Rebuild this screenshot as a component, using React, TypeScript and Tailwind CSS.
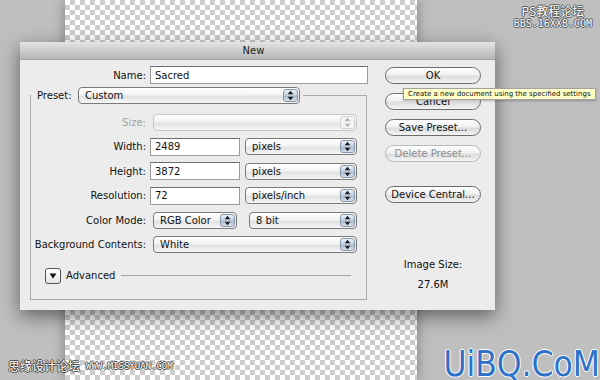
import React from "react";

function Arrows({ disabled }: { disabled?: boolean }) {
  const c = disabled ? "#b4b4b4" : "#1a1a1a";
  return (
    <svg width="7" height="11" viewBox="0 0 7 11">
      <path d="M3.5 0.8 L6.3 4.2 L0.7 4.2 Z" fill={c} />
      <path d="M0.7 6.8 L6.3 6.8 L3.5 10.2 Z" fill={c} />
    </svg>
  );
}

function Select({
  className,
  text,
  disabled,
}: {
  className: string;
  text: string;
  disabled?: boolean;
}) {
  return (
    <div
      className={`flex h-[17px] items-stretch overflow-hidden rounded-[4px] border bg-[linear-gradient(#ffffff,#f4f4f4_45%,#e2e2e2_55%,#f6f6f6)] ${
        disabled ? "border-[#c6c6c6]" : "border-[#7a7a7a]"
      } ${className}`}
    >
      <div className="flex flex-1 items-center pl-[6px] text-[10px] text-[#111]">{text}</div>
      <div
        className={`my-[1px] mr-[1px] flex w-[15px] items-center justify-center rounded-[3px] border ${
          disabled
            ? "border-[#d2d2d2] bg-[#f4f4f4]"
            : "border-[#8696aa] bg-[linear-gradient(#eaf0f6,#c4d0de_48%,#a8b9cd_55%,#d6e0eb)]"
        }`}
      >
        <Arrows disabled={disabled} />
      </div>
    </div>
  );
}

function Input({ className, value }: { className: string; value: string }) {
  return (
    <div
      className={`flex h-[18px] items-center border border-[#9a9a9a] border-t-[#6e6e6e] bg-white pl-[4px] text-[10px] text-[#111] ${className}`}
    >
      {value}
    </div>
  );
}

function Btn({ children, disabled }: { children: React.ReactNode; disabled?: boolean }) {
  return (
    <div
      className={`flex h-[17px] w-[96px] items-center justify-center rounded-full border bg-[linear-gradient(#fefefe,#f1f1f1_45%,#dcdcdc_55%,#f4f4f4)] text-[10px] ${
        disabled ? "border-[#b9b9b9] text-[#8e8e8e]" : "border-[#6c6c6c] text-[#111]"
      }`}
    >
      {children}
    </div>
  );
}

function Label({ children, disabled }: { children: React.ReactNode; disabled?: boolean }) {
  return (
    <div
      className={`w-[115px] shrink-0 text-right text-[10px] ${disabled ? "text-[#a3a3a3]" : "text-[#111]"}`}
    >
      {children}
    </div>
  );
}

export default function App() {
  return (
    <div className="relative h-[380px] w-[600px] overflow-hidden bg-[#bfbfbf] font-['DejaVu_Sans',sans-serif]">
      {/* canvas */}
      <div className="flex h-full pl-[65px]">
        <div className="h-full w-[352px] bg-[image:repeating-conic-gradient(#cdcdcd_0_25%,#ffffff_0_50%)] bg-[length:10px_10px] shadow-[0_0_12px_rgba(0,0,0,0.35)]" />
      </div>

      {/* dialog */}
      <div className="absolute left-[20px] top-[42px] flex h-[268px] w-[475px] flex-col bg-[#ececec] shadow-[0_6px_18px_rgba(0,0,0,0.5)]">
        <div className="flex h-[18px] items-center justify-center border-b border-[#a4a4a4] bg-[linear-gradient(#e4e4e4,#b6b6b6)] pr-[8px] text-[10px] text-[#1a1a1a]">
          New
        </div>
        <div className="flex flex-1">
          {/* left column */}
          <div className="flex w-[350px] flex-col pt-[6px]">
            <div className="flex h-[18px] items-center">
              <div className="w-[126px] text-right text-[10px] text-[#111]">Name:</div>
              <Input className="ml-[4px] w-[218px]" value="Sacred" />
            </div>
            <fieldset className="ml-[10px] mt-[3px] w-[337px] border border-[#ababab] pb-[15px]">
              <legend className="flex items-center pl-[6px] pr-[3px]">
                <span className="w-[38px] text-[10px] text-[#111]">Preset:</span>
                <Select className="ml-[3px] w-[222px]" text="Custom" />
              </legend>
              <div className="flex flex-col gap-[6.6px] pt-[9px]">
                <div className="flex h-[18px] items-center">
                  <Label disabled>Size:</Label>
                  <Select className="ml-[7px] w-[204px]" text="" disabled />
                </div>
                <div className="flex h-[18px] items-center">
                  <Label>Width:</Label>
                  <Input className="ml-[4px] w-[90px]" value="2489" />
                  <Select className="ml-[5px] w-[112px]" text="pixels" />
                </div>
                <div className="flex h-[18px] items-center">
                  <Label>Height:</Label>
                  <Input className="ml-[4px] w-[90px]" value="3872" />
                  <Select className="ml-[5px] w-[112px]" text="pixels" />
                </div>
                <div className="flex h-[18px] items-center">
                  <Label>Resolution:</Label>
                  <Input className="ml-[4px] w-[90px]" value="72" />
                  <Select className="ml-[5px] w-[112px]" text="pixels/inch" />
                </div>
                <div className="flex h-[18px] items-center">
                  <Label>Color Mode:</Label>
                  <Select className="ml-[7px] w-[84px]" text="RGB Color" />
                  <Select className="ml-[12px] w-[108px]" text="8 bit" />
                </div>
                <div className="flex h-[18px] items-center">
                  <Label>Background Contents:</Label>
                  <Select className="ml-[7px] w-[204px]" text="White" />
                </div>
              </div>
              <div className="mt-[14px] flex h-[16px] items-center">
                <div className="ml-[14px] flex h-[16px] w-[16px] items-center justify-center rounded-[3px] border border-[#555] bg-[linear-gradient(#ffffff,#e4e4e4)]">
                  <svg width="8" height="6" viewBox="0 0 8 6">
                    <path d="M0.5 0.5 L7.5 0.5 L4 5.5 Z" fill="#111" />
                  </svg>
                </div>
                <span className="ml-[5px] text-[10px] text-[#111]">Advanced</span>
                <div className="ml-[6px] mr-[15px] h-[2px] flex-1 border-t border-[#a4a4a4] border-b-white" />
              </div>
            </fieldset>
          </div>

          {/* right column */}
          <div className="flex flex-col items-start pl-[15px] pt-[7px]">
            <Btn>OK</Btn>
            <div className="mt-[9px]">
              <Btn>Cancel</Btn>
            </div>
            <div className="mt-[9px]">
              <Btn>Save Preset...</Btn>
            </div>
            <div className="mt-[9px]">
              <Btn disabled>Delete Preset...</Btn>
            </div>
            <div className="mt-[24px]">
              <Btn>Device Central...</Btn>
            </div>
            <div className="mt-[56px] w-[96px] text-center text-[10px] leading-[12px] text-[#111]">
              Image Size:
            </div>
            <div className="mt-[8px] w-[96px] text-center text-[10px] leading-[12px] text-[#111]">27.6M</div>
          </div>
        </div>
      </div>

      {/* tooltip */}
      <div className="absolute left-[403px] top-[88px] flex h-[12px] items-center whitespace-nowrap border border-[#a2a2a2] bg-[#fefec6] px-[4px] text-[7px] text-[#111] shadow-[0_1px_2px_rgba(0,0,0,0.25)]">
        Create a new document using the specified settings
      </div>

      {/* watermarks */}
      <div className="absolute right-[8px] top-[5px] flex flex-col items-center leading-none text-white">
        <span className="font-['Noto_Sans_CJK_SC',sans-serif] text-[12px] [text-shadow:1px_0_#555,-1px_0_#555,0_1px_#555,0_-1px_#555]">
          PS教程论坛
        </span>
        <span className="mt-[2px] font-['DejaVu_Sans_Mono',monospace] text-[10px] [text-shadow:1px_0_#555,-1px_0_#555,0_1px_#555,0_-1px_#555]">
          BBS.16XX8.COM
        </span>
      </div>
      <div className="absolute bottom-[8px] left-[8px] flex items-center gap-[6px] leading-none text-white">
        <span className="font-['Noto_Sans_CJK_SC',sans-serif] text-[12px] [text-shadow:1px_0_#444,-1px_0_#444,0_1px_#444,0_-1px_#444]">
          思缘设计论坛
        </span>
        <span className="font-['DejaVu_Sans_Mono',monospace] text-[9px] [text-shadow:1px_0_#444,-1px_0_#444,0_1px_#444,0_-1px_#444]">
          WWW.MISSYUAN.COM
        </span>
      </div>
      <div className="absolute bottom-[-2px] right-[0px] font-['DejaVu_Sans_Condensed','DejaVu_Sans',sans-serif] text-[35px] leading-none text-[#2f72c9] [text-shadow:1px_0_#fff,-1px_0_#fff,0_1px_#fff,0_-1px_#fff]">
        UiBQ.CoM
      </div>
    </div>
  );
}
